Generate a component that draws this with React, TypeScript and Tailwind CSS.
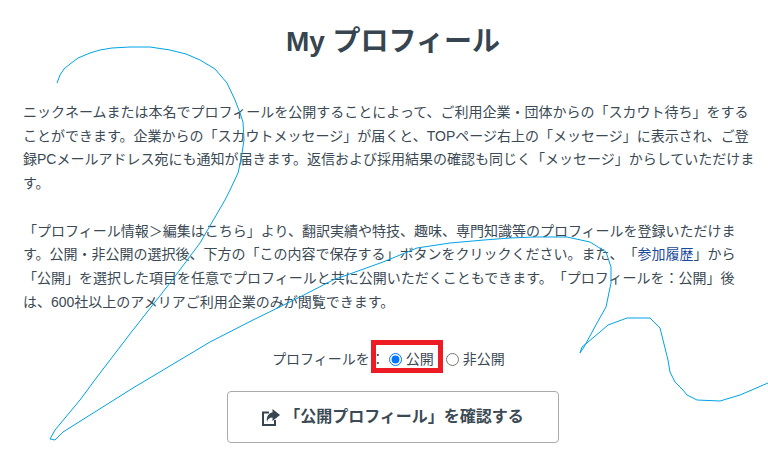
import React from "react";

const scribble =
  "57,83 60,75 64,69 70,64 78,58 90,53 100,50 112,48 130,47 150,47 170,50 186,54 200,60 215,69 227,83 235,100 240,113 243,122 244,140 241,160 238,173 230,190 225,200 200,243 170,283 133,330 97,377 80,400 55,430 50,439 55,440 63,432 133,388 210,342 253,320 300,297 333,280 383,262 417,248 450,243 484,240 510,238 534,237 567,237 590,242 606,252 611,267 611,283 606,307 597,323 584,347 580,353 582,347 600,332 608,325 627,318 650,318 660,328 668,360 670,372 675,382 683,390 687,395 697,400 720,401 740,395 768,383";

export default function App() {
  return (
    <div className="relative h-[455px] w-[768px] overflow-hidden bg-white font-['Liberation_Sans','Noto_Sans_CJK_JP',sans-serif] text-[#3b4a54] [text-spacing-trim:space-all]">
      <div className="ml-[23px] flex w-[735px] flex-col">
        <h1 className="mt-[22px] pl-[5px] text-center text-[28px] font-bold leading-[40px] text-[#36454f]">My プロフィール</h1>
        <div className="mt-[39px] text-[14px] leading-[23.7px]">
          <p>ニックネームまたは本名でプロフィールを公開することによって、ご利用企業・団体からの「スカウト待ち」をすることができます。企業からの「スカウトメッセージ」が届くと、TOPページ右上の「メッセージ」に表示され、ご登録PCメールアドレス宛にも通知が届きます。返信および採用結果の確認も同じく「メッセージ」からしていただけます。</p>
          <p className="mt-[23.7px]">「プロフィール情報＞編集はこちら」より、翻訳実績や特技、趣味、専門知識等のプロフィールを登録いただけます。公開・非公開の選択後、下方の「この内容で保存する」ボタンをクリックください。また、「<span className="text-[#1a4a9c]">参加履歴</span>」から「公開」を選択した項目を任意でプロフィールと共に公開いただくこともできます。「プロフィールを：公開」後は、600社以上のアメリアご利用企業のみが閲覧できます。</p>
        </div>
        <div className="mt-[35px] flex items-center justify-center pr-[4px] text-[14px] leading-[20px]">
          <span>プロフィールを</span>
          <span className="ml-[1px] mr-[-1px]">：</span>
          <label className="ml-[5px] flex items-center gap-[4px]">
            <input type="radio" name="p" defaultChecked className="m-0 h-[13px] w-[13px]" />
            公開
          </label>
          <label className="ml-[12px] flex items-center gap-[4px]">
            <input type="radio" name="p" className="m-0 h-[13px] w-[13px]" />
            非公開
          </label>
        </div>
        <div className="mt-[22px] ml-[204px]">
          <button className="flex h-[52px] w-[332px] items-center justify-center gap-[4px] rounded-[4px] border border-[#aaaaaa] text-[16px] font-bold text-[#3b4a54]">
            <svg width="18" height="17" viewBox="0 0 18 17" fill="#36454f" className="shrink-0">
              <path d="M7 3.5H1V16H13V11" fill="none" stroke="#36454f" strokeWidth="2" />
              <path d="M10.5 0L18 6L10.5 12V8.5C7.5 8.5 5.5 10 5 13C4 8 6.5 4 10.5 3.5Z" />
            </svg>
            「公開プロフィール」を確認する
          </button>
        </div>
      </div>
      <div className="absolute left-[371px] top-[340px] h-[33px] w-[72px] border-[5px] border-[#ed1c24]" />
      <svg className="absolute left-0 top-0" width="768" height="455" fill="none">
        <polyline points={scribble} stroke="#00a2e8" strokeWidth="1" />
      </svg>
    </div>
  );
}
